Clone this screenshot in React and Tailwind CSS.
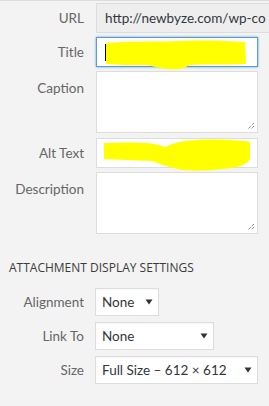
import React from "react";

const Label = ({ children, top }) => (
  <div className={`w-[84px] shrink-0 text-right text-[13.5px] text-[#666] ${top ? "pt-[7px]" : "self-center"}`}>
    {children}
  </div>
);

const Row = ({ label, top, className = "", children }) => (
  <div className={`flex gap-[12px] ${className}`}>
    <Label top={top}>{label}</Label>
    {children}
  </div>
);

const Grip = () => (
  <svg className="absolute bottom-[2px] right-[2px]" width="9" height="9" viewBox="0 0 9 9">
    <path d="M8 2 L2 8 M8 5 L5 8" stroke="#555" strokeWidth="1" strokeDasharray="1 1" />
  </svg>
);

const Select = ({ value, width }) => (
  <div className={`${width} h-[28px] flex items-center justify-between bg-white border border-[#ddd] pl-[6px] pr-[5px] text-[13.5px] text-[#32373c] shadow-[inset_0_1px_2px_rgba(0,0,0,0.04)]`}>
    <span className="whitespace-nowrap">{value}</span>
    <svg width="8" height="6" viewBox="0 0 8 6">
      <path d="M0.5 0.5 H7.5 L4 5.5 Z" fill="#333" />
    </svg>
  </div>
);

export default function App() {
  return (
    <div
      className="w-[269px] h-[406px] bg-[#f3f3f3] border-t border-[#ddd] overflow-hidden"
      style={{ fontFamily: 'Lato, "Open Sans", sans-serif' }}
    >
      <div className="flex flex-col gap-[4px] pt-[2px] pr-[11px]">
        <Row label="URL">
          <div className="flex-1 h-[30px] flex items-center bg-[#eee] border border-[#ddd] px-[8px] text-[13.5px] text-[#32373c]">
            <span className="whitespace-nowrap">http://newbyze.com/wp-co</span>
          </div>
        </Row>
        <Row label="Title">
          <div className="relative flex-1 h-[30px] bg-white border border-[#5b9dd9] shadow-[0_0_2px_rgba(30,140,190,0.8)]">
            <svg className="absolute left-0 top-0" width="162" height="34" viewBox="0 0 162 34">
              <path
                d="M9 5 C30 3 60 4 85 3 C110 2 130 3 148 4 L149 26 C130 27 110 26 92 27 C88 31 80 32 70 31 C60 30 56 28 50 27 C35 27 20 27 9 26 Z"
                fill="#ffff00"
              />
            </svg>
            <div className="absolute left-[8px] top-[6px] w-px h-[17px] bg-black" />
          </div>
        </Row>
        <Row label="Caption" top>
          <div className="relative flex-1 h-[62px] bg-white border border-[#ddd]">
            <Grip />
          </div>
        </Row>
        <Row label="Alt Text" className="mt-[1px]">
          <div className="relative flex-1 h-[30px] bg-white border border-[#ddd]">
            <svg className="absolute left-0 top-0" width="162" height="34" viewBox="0 0 162 34">
              <path
                d="M7 4 C20 4 30 3 45 4 C55 4 62 6 68 8 C75 5 82 2 100 1 C120 0 140 1 153 3 L153 20 C150 26 140 29 125 30 C110 32 95 32 85 31 C75 29 65 26 55 22 C40 21 20 21 7 20 Z"
                fill="#ffff00"
              />
            </svg>
          </div>
        </Row>
        <Row label="Description" top>
          <div className="relative flex-1 h-[62px] bg-white border border-[#ddd]">
            <Grip />
          </div>
        </Row>
      </div>

      <h2
        className="mt-[26px] pl-[9px] text-[12px] font-medium uppercase text-[#3c3c3c] leading-[16px]"
        style={{ fontFamily: '"Open Sans", sans-serif' }}
      >
        Attachment Display Settings
      </h2>

      <div className="flex flex-col gap-[6px] mt-[12px] pr-[11px]">
        <div className="flex gap-[11px]">
          <Label>Alignment</Label>
          <Select value="None" width="w-[64px]" />
        </div>
        <div className="flex gap-[11px]">
          <Label>Link To</Label>
          <Select value="None" width="w-[119px]" />
        </div>
        <div className="flex gap-[11px]">
          <Label>Size</Label>
          <Select value="Full Size – 612 × 612" width="w-[163px]" />
        </div>
      </div>
    </div>
  );
}
